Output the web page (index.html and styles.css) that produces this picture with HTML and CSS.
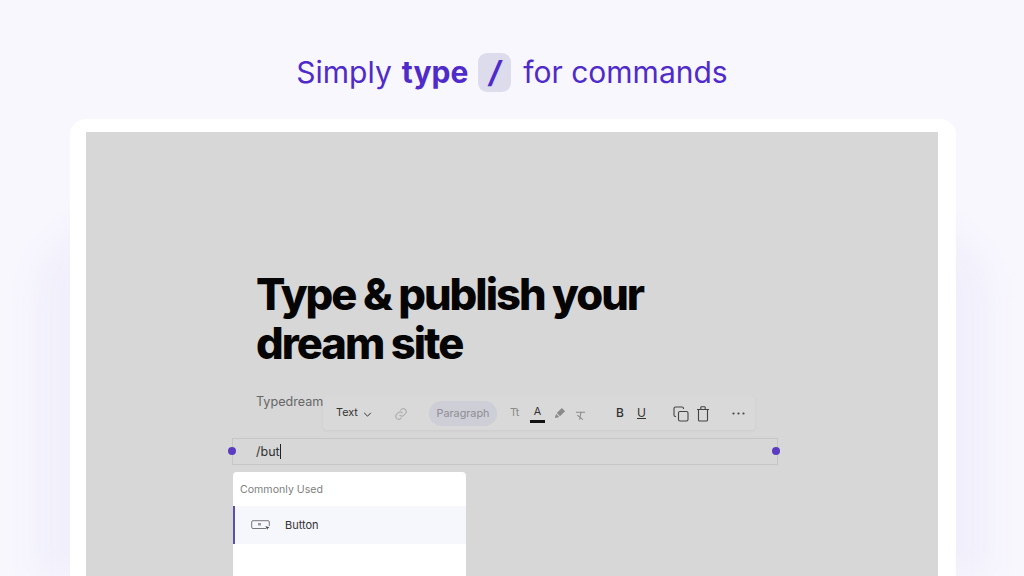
FILE: index.html
```html
<!DOCTYPE html>
<html lang="en">
<head>
    <meta charset="UTF-8">
    <title>Simply type / for commands</title>
    <link rel="stylesheet" href="styles.css">
</head>
<body>
    <div class="glow"></div>
    <header class="headline">
        <span>Simply</span>
        <strong>type</strong>
        <span class="key">/</span>
        <span>for commands</span>
    </header>
    <main class="frame">
        <div class="canvas">
            <div class="doc">
                <h1>Type &amp; publish your<br>dream site</h1>
                <p class="sub">Typedream</p>
            </div>

            <div class="toolbar">
                <span class="tb-text">Text</span>
                <svg class="tb-chevron" width="9" height="5" viewBox="0 0 10 6"><path d="M1 1l4 4 4-4" fill="none" stroke="#333" stroke-width="1.200"/></svg>
                <svg class="tb-link" width="14" height="14" viewBox="0 0 24 24" fill="none" stroke="#b0b0b0" stroke-width="2" stroke-linecap="round"><path d="M10 14a5 5 0 0 0 7 0l3-3a5 5 0 0 0-7-7l-1.500 1.500"/><path d="M14 10a5 5 0 0 0-7 0l-3 3a5 5 0 0 0 7 7l1.500-1.500"/></svg>
                <span class="tb-pill">Paragraph</span>
                <span class="tb-size">Tt</span>
                <span class="tb-color">A</span>
                <svg class="tb-marker" width="12" height="12" viewBox="0 0 13 13"><path d="M8.500 1l3.500 3.500-5.500 5.500-3.500-3.500zM2.500 7.500l3 3-1.500 1-3 .5 .5-2.500z" fill="#8a8a8a"/></svg>
                <svg class="tb-clear" width="11" height="11" viewBox="0 0 12 12" fill="none" stroke="#8a8a8a" stroke-width="1.100"><path d="M1 2.500h10M6.500 2.500l-1.500 8M2.500 5.500l6 5"/></svg>
                <span class="tb-bold">B</span>
                <span class="tb-under">U</span>
                <svg class="tb-copy" width="16" height="16" viewBox="0 0 16 16" fill="none" stroke="#444" stroke-width="1.100"><rect x="5.500" y="5.500" width="9.500" height="9.500" rx="1.500"/><path d="M3 10.500H2.500A1.500 1.500 0 0 1 1 9V2.500A1.500 1.500 0 0 1 2.500 1H9a1.500 1.500 0 0 1 1.500 1.500V3"/></svg>
                <svg class="tb-trash" width="14" height="16" viewBox="0 0 14 16" fill="none" stroke="#444" stroke-width="1.100"><path d="M1 3.500h12M2.500 3.500v10.500a1 1 0 0 0 1 1h7a1 1 0 0 0 1-1V3.500M4.800 3.500V1.500a.8.8 0 0 1 .8-.8h2.800a.8.8 0 0 1 .8.8v2"/></svg>
                <svg class="tb-more" width="13" height="3" viewBox="0 0 13 3"><circle cx="1.500" cy="1.500" r="1.100" fill="#444"/><circle cx="6.500" cy="1.500" r="1.100" fill="#444"/><circle cx="11.500" cy="1.500" r="1.100" fill="#444"/></svg>
            </div>

            <div class="input-row">
                <span class="dot dot-left"></span>
                <span class="typed">/but</span><span class="caret"></span>
                <span class="dot dot-right"></span>
            </div>

            <div class="menu">
                <div class="menu-title">Commonly Used</div>
                <div class="menu-item">
                    <svg width="19" height="10" viewBox="0 0 19 10" fill="none"><path d="M15 8.500H2a1.300 1.300 0 0 1-1.300-1.300V2A1.300 1.300 0 0 1 2 .7h15A1.300 1.300 0 0 1 18.300 2v4" stroke="#777" stroke-width="1"/><path d="M7 3h3v2.500H7z" fill="#999"/><path d="M14.500 6l4 1.500-1.600.7-.7 1.600z" fill="#444"/></svg>
                    <span>Button</span>
                </div>
            </div>
        </div>
    </main>
</body>
</html>
```

FILE: styles.css
```css
body {
    margin: 0;
    height: 576px;
    overflow: hidden;
    position: relative;
    display: flex;
    flex-direction: column;
    background-color: #f8f7fe;
    font-family: Inter, "Liberation Sans", sans-serif;
}

/* soft lavender halo behind the frame */
.glow {
    position: absolute;
    left: 36px;
    right: 36px;
    top: 225px;
    bottom: 0;
    border-radius: 70px 70px 0 0;
    background: #f0effb;
    filter: blur(14px);
}

.headline {
    position: relative;
    height: 119px;
    box-sizing: border-box;
    padding-top: 53px;
    display: flex;
    justify-content: center;
    align-items: flex-start;
    gap: 10px;
    font-size: 30px;
    line-height: 39px;
    color: #4f2bc9;
}

.headline span {
    font-weight: 400;
}

.headline strong {
    font-weight: 700;
}

.headline .key {
    width: 33px;
    height: 39px;
    margin-right: 2px;
    border-radius: 9px;
    background: #dddcec;
    text-align: center;
    font-weight: 700;
    font-style: italic;
}

.frame {
    position: relative;
    flex: 1;
    margin: 0 68px 0 70px;
    padding: 13px 18px 0 16px;
    background: #fff;
    border-radius: 16px 16px 0 0;
    min-height: 0;
}

.canvas {
    position: relative;
    height: 100%;
    background: #d7d7d7;
    overflow: hidden;
}

.doc {
    padding: 138px 0 0 170px;
}

.doc h1 {
    margin: 0;
    font-size: 43.500px;
    line-height: 49px;
    font-weight: 800;
    letter-spacing: -2px;
    color: #050505;
}

.sub {
    margin: 25px 0 0;
    font-size: 12.600px;
    line-height: 18px;
    color: #666;
}

.toolbar {
    position: absolute;
    left: 237px;
    top: 264px;
    width: 432px;
    height: 34px;
    background: #d9d9d9;
    border-radius: 4px;
    box-shadow: 0 1px 3px rgba(0, 0, 0, 0.05);
    color: #444;
    font-size: 10.800px;
}

.toolbar > * {
    position: absolute;
}

.tb-text { left: 13px; top: 10px; color: #333; }
.tb-chevron { left: 40px; top: 16px; }
.tb-link { left: 71px; top: 11px; }

.tb-pill {
    left: 106px;
    top: 5px;
    width: 68px;
    height: 25px;
    line-height: 25px;
    border-radius: 13px;
    background: #cdced6;
    color: #8d8d92;
    text-align: center;
}

.tb-size { left: 187px; top: 10px; color: #8a8a8a; }

.tb-color {
    left: 207px;
    top: 9px;
    width: 15px;
    height: 15px;
    border-bottom: 3px solid #111;
    text-align: center;
    color: #333;
}

.tb-marker { left: 231px; top: 11px; }
.tb-clear { left: 252px; top: 14px; }
.tb-bold { left: 293px; top: 9px; color: #333; font-size: 12px; font-weight: 500; }
.tb-under { left: 314px; top: 9px; color: #333; font-size: 12px; text-decoration: underline; }
.tb-copy { left: 350px; top: 10px; }
.tb-trash { left: 373px; top: 10px; }
.tb-more { left: 409px; top: 16px; }

.input-row {
    position: absolute;
    left: 146px;
    top: 306px;
    width: 546px;
    height: 27px;
    box-sizing: border-box;
    padding-left: 23px;
    display: flex;
    align-items: center;
    border: 1px solid #c6c6c6;
    font-size: 12.500px;
    color: #333;
}

.caret {
    width: 1px;
    height: 15px;
    background: #222;
}

.dot {
    position: absolute;
    top: 8px;
    width: 8px;
    height: 8px;
    border-radius: 50%;
    background: #5a3cc0;
}

.dot-left { left: -5px; }
.dot-right { right: -3px; }

.menu {
    position: absolute;
    left: 147px;
    top: 340px;
    width: 233px;
    height: 104px;
    background: #fff;
    border-radius: 4px 4px 0 0;
}

.menu-title {
    height: 34px;
    box-sizing: border-box;
    padding: 10px 0 0 7px;
    font-size: 10.600px;
    line-height: 15px;
    color: #808080;
}

.menu-item {
    height: 38px;
    box-sizing: border-box;
    padding-left: 16px;
    display: flex;
    align-items: center;
    gap: 15px;
    background: #f6f6fd;
    border-left: 2px solid #5a4fa0;
    font-size: 11px;
    color: #333;
}
```
